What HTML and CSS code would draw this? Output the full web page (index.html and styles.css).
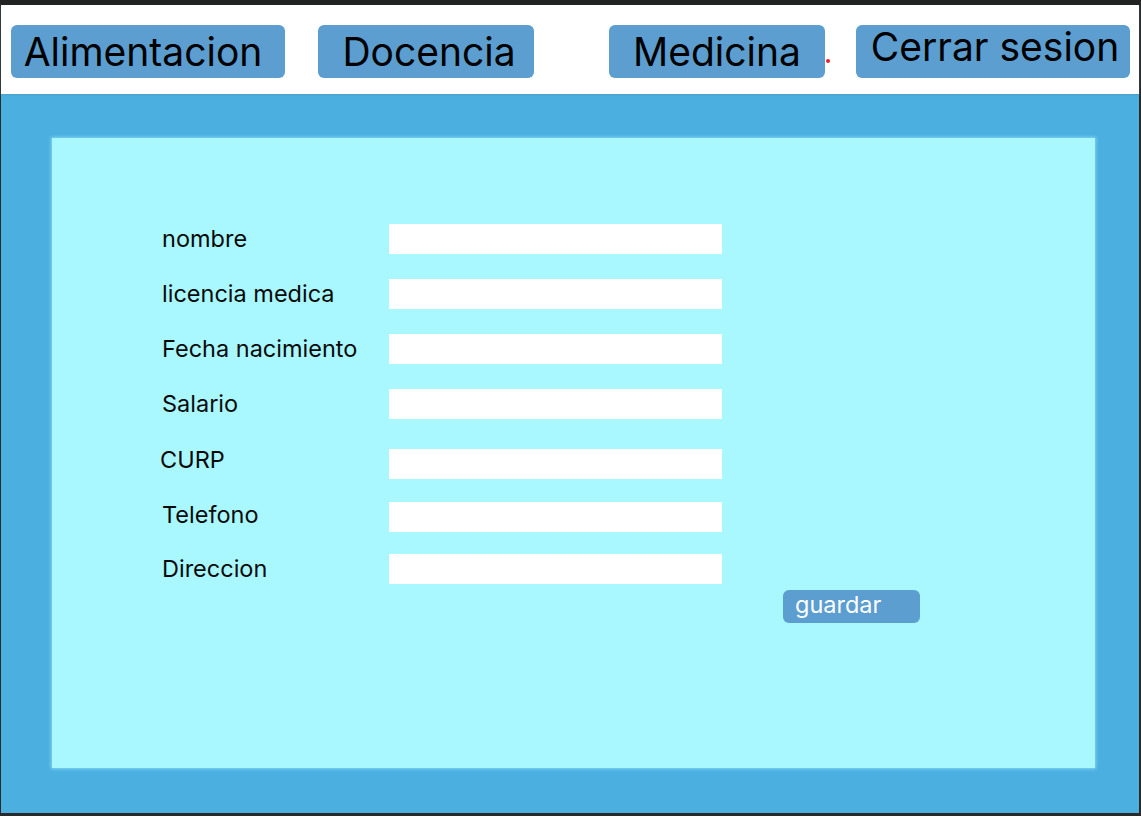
FILE: index.html
```html
<!DOCTYPE html>
<html lang="es">
<head>
<meta charset="utf-8">
<title>Medicina</title>
<link rel="stylesheet" href="styles.css">
</head>
<body>
<div class="frame">
  <header class="topbar">
    <button class="nav-btn nav-wide nav-first">Alimentacion</button>
    <button class="nav-btn nav-narrow nav-docencia">Docencia</button>
    <button class="nav-btn nav-narrow nav-medicina">Medicina</button>
    <span class="dot"></span>
    <button class="nav-btn nav-wide nav-cerrar">Cerrar sesion</button>
  </header>
  <main class="stage">
    <section class="panel">
      <form class="form">
        <div class="row"><label class="lbl">nombre</label><span class="field"></span></div>
        <div class="row"><label class="lbl">licencia medica</label><span class="field"></span></div>
        <div class="row"><label class="lbl">Fecha nacimiento</label><span class="field"></span></div>
        <div class="row"><label class="lbl">Salario</label><span class="field"></span></div>
        <div class="row row-curp"><label class="lbl lbl-curp">CURP</label><span class="field"></span></div>
        <div class="row row-tel"><label class="lbl lbl-tel">Telefono</label><span class="field"></span></div>
        <div class="row row-dir"><label class="lbl">Direccion</label><span class="field"></span></div>
        <div class="actions"><button type="button" class="save">guardar</button></div>
      </form>
    </section>
  </main>
</div>
</body>
</html>
```

FILE: styles.css
```css
* { box-sizing: border-box; }
html, body { margin: 0; padding: 0; }
body {
  width: 1141px;
  height: 816px;
  font-family: Inter, "Noto Sans", sans-serif;
  background: #1e1e1e;
  overflow: hidden;
}
.frame {
  width: 1141px;
  height: 816px;
  border-top: 5px solid #222;
  border-left: 1px solid #2a2a2a;
  border-right: 2px solid #2a2a2a;
  border-bottom: 3px solid #2a2a2a;
  display: flex;
  flex-direction: column;
  background: #4bb0e0;
}
.topbar {
  height: 89px;
  background: #ffffff;
  display: flex;
  align-items: flex-start;
  padding: 20px 0 0 10px;
  box-shadow: 0 1px 2px rgba(80, 140, 170, 0.5);
  position: relative;
  z-index: 1;
}
.nav-btn {
  height: 53px;
  border: none;
  border-radius: 6px;
  background: #5b9ecf;
  color: #000;
  font-family: Inter, "Noto Sans", sans-serif;
  font-size: 39px;
  font-weight: 400;
  line-height: 53px;
  padding: 0;
  text-align: center;
  white-space: nowrap;
}
.nav-wide { width: 274px; }
.nav-narrow { width: 216px; }
.nav-first { padding-right: 10px; }
.nav-docencia { margin-left: 33px; padding-left: 6px; }
.nav-medicina { margin-left: 75px; }
.nav-cerrar { margin-left: 26px; line-height: 43px; padding: 0 0 10px 4px; }
.dot {
  width: 4px;
  height: 4px;
  border-radius: 50%;
  background: #e8202a;
  margin: 34px 0 0 1px;
}
.stage {
  flex: 1;
  padding: 44px 44px 45px 51px;
  display: flex;
}
.panel {
  flex: 1;
  background: #a9f8ff;
  box-shadow: 0 0 3px 1px rgba(150, 230, 250, 0.7);
  padding: 86px 0 0 110px;
}
.form {
  display: flex;
  flex-direction: column;
  gap: 25px;
  width: 760px;
}
.row {
  display: flex;
  align-items: center;
  height: 30px;
}
.row-curp { margin-top: 5px; }
.row-tel { margin-top: -2px; }
.row-dir { margin-top: -3px; }
.lbl {
  width: 227px;
  font-size: 23.5px;
  color: #0a0a0a;
  line-height: 30px;
  white-space: nowrap;
}
.lbl-curp { margin-left: -2px; width: 229px; position: relative; top: -4px; }
.lbl-tel { position: relative; top: -2px; }
.field {
  width: 333px;
  height: 30px;
  background: #ffffff;
}
.actions {
  margin-top: -19px;
  padding-left: 621px;
}
.save {
  width: 137px;
  height: 33px;
  border: none;
  border-radius: 6px;
  background: #5b9ecf;
  color: #ffffff;
  font-family: Inter, "Noto Sans", sans-serif;
  font-size: 23.5px;
  line-height: 30px;
  text-align: left;
  padding: 0 0 4px 12px;
}
```
